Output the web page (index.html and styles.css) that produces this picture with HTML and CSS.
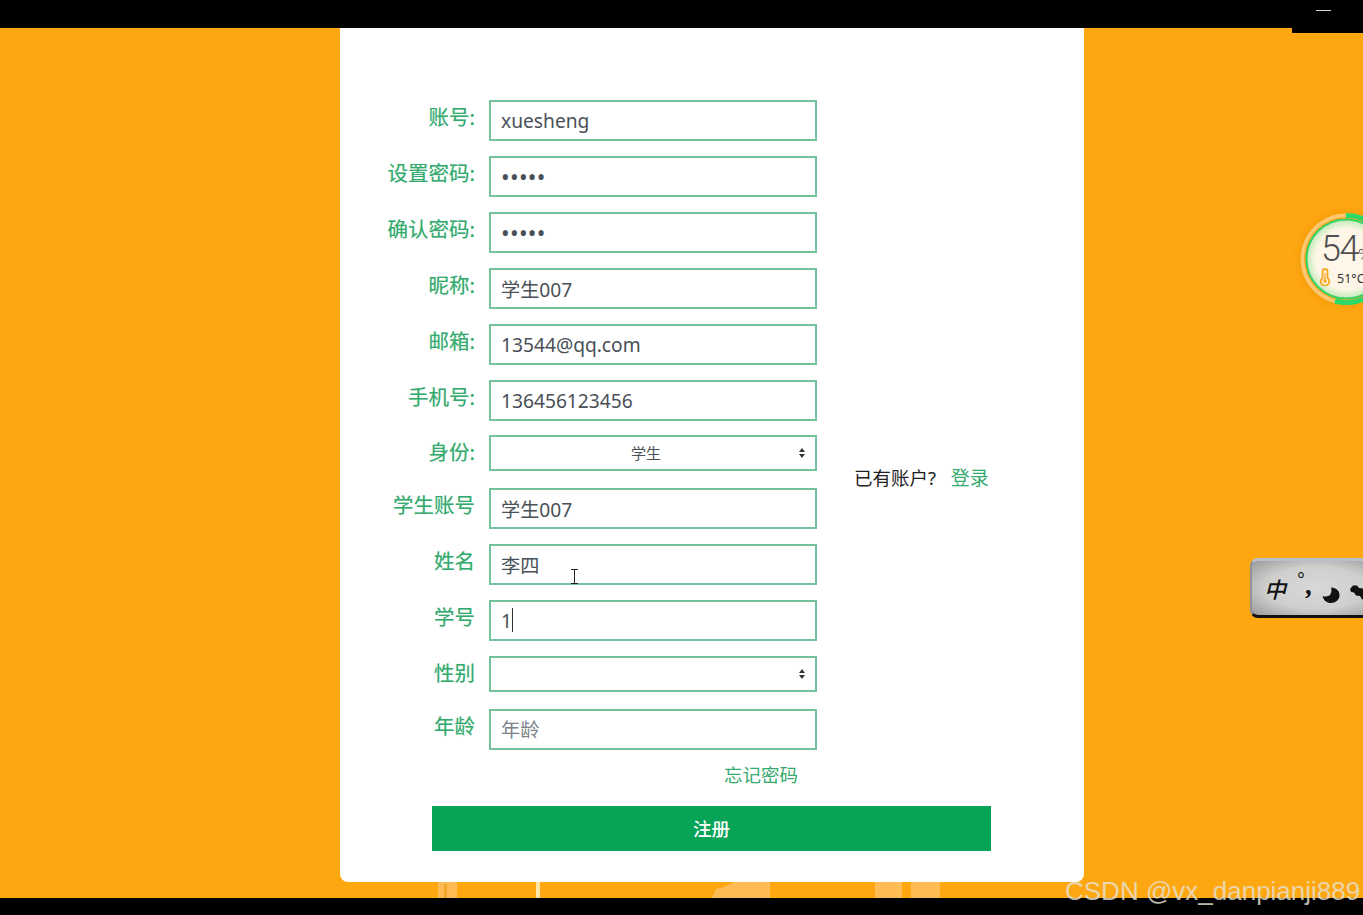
FILE: index.html
```html
<!DOCTYPE html>
<html lang="zh-CN">
<head>
<meta charset="utf-8">
<title>注册</title>
<link rel="stylesheet" href="styles.css">
</head>
<body>
<div class="screen">
  <header class="topbar"><span class="minimize"></span></header>
  <main class="stage">
    <div class="notch"></div>
    <svg class="bg-strip" width="1363" height="16" viewBox="0 0 1363 16" aria-hidden="true">
      <rect x="438" y="0" width="19" height="16" fill="#ffbc55"/>
      <rect x="444" y="2" width="3" height="14" fill="#f2a52a"/>
      <rect x="536" y="0" width="4" height="16" fill="#ffe6a8"/>
      <path d="M712 16 L716 7 L724 5 L734 0 H770 V16 Z" fill="#ffbc55"/>
      <rect x="875" y="0" width="27" height="16" fill="#ffbc55"/>
      <rect x="911" y="0" width="29" height="16" fill="#ffbc55"/>
    </svg>
    <form class="card">
      <div class="card-body">
        <div class="fields">
          <div class="row"><label class="label">账号:</label><input class="input" value="xuesheng"></div>
          <div class="row"><label class="label">设置密码:</label><input class="input input-pw" type="password" value="12345"></div>
          <div class="row"><label class="label">确认密码:</label><input class="input input-pw" type="password" value="12345"></div>
          <div class="row"><label class="label">昵称:</label><input class="input" value="学生007"></div>
          <div class="row"><label class="label">邮箱:</label><input class="input" value="13544@qq.com"></div>
          <div class="row row-tight"><label class="label">手机号:</label><input class="input" value="136456123456"></div>
          <div class="row row-select"><label class="label">身份:</label><div class="select-wrap"><select class="select"><option>学生</option></select></div></div>
          <div class="row"><label class="label">学生账号</label><input class="input" value="学生007"></div>
          <div class="row"><label class="label">姓名</label><div class="input-wrap"><input class="input" value="李四"><span class="ibeam"></span></div></div>
          <div class="row"><label class="label">学号</label><div class="input-wrap"><input class="input" value="1"><span class="caret"></span></div></div>
          <div class="row row-select"><label class="label">性别</label><div class="select-wrap"><select class="select"><option></option></select></div></div>
          <div class="row"><label class="label">年龄</label><input class="input" placeholder="年龄"></div>
          <div class="forgot"><a class="link" href="#">忘记密码</a></div>
        </div>
        <aside class="aside">已有账户? <a class="link login" href="#">登录</a></aside>
      </div>
      <button class="submit" type="button">注册</button>
    </form>

    <div class="gauge">
      <svg class="gauge-ring" width="92" height="92" viewBox="0 0 92 92" aria-hidden="true">
        <defs>
          <radialGradient id="gauge-fill" cx="50%" cy="50%" r="50%">
            <stop offset="0%" stop-color="#fff8ec"/>
            <stop offset="78%" stop-color="#fdf6e6"/>
            <stop offset="100%" stop-color="#c4ecbc"/>
          </radialGradient>
        </defs>
        <circle cx="46" cy="46" r="39" fill="url(#gauge-fill)"/>
        <circle cx="46" cy="46" r="43.500" fill="none" stroke="#ffc877" stroke-width="3.500"/>
        <circle cx="46" cy="46" r="39.500" fill="none" stroke="#35d26c" stroke-width="2"/>
        <path d="M46 2.500 A43.500 43.500 0 1 1 35 88" fill="none" stroke="#2bd968" stroke-width="5"/>
      </svg>
      <span class="gauge-value">54<small class="gauge-pct">%</small></span>
      <svg class="gauge-thermo" width="12" height="18" viewBox="0 0 12 18" aria-hidden="true">
        <path d="M3.500 10V3.500a2.500 2.500 0 0 1 5 0V10a4.300 4.300 0 1 1-5 0Z" fill="#fff0d0" stroke="#f9a825" stroke-width="1.800"/>
        <circle cx="6" cy="13" r="1.800" fill="#f9a825"/>
        <path d="M6 5v7" stroke="#f9a825" stroke-width="1.200"/>
      </svg>
      <span class="gauge-temp">51°C</span>
    </div>

    <div class="ime">
      <span class="ime-zh">中</span>
      <span class="ime-deg">°</span>
      <span class="ime-comma">,</span>
      <svg class="ime-moon" width="18" height="16" viewBox="0 0 18 16" aria-hidden="true">
        <path d="M9 0.500 C14 0.500 18 4 17.500 9 C17 13 13.500 16 9 16 C5 16 1.500 13.500 0.500 9 C3 10 6 9.500 8 8 C9.500 6 10 3 9 0.500 Z" fill="#111"/>
      </svg>
      <svg class="ime-dog" width="16" height="15" viewBox="0 0 16 15" aria-hidden="true">
        <path d="M0 4 L3 0.500 L7 0.500 L9 3 L16 4 V13 L12 14.500 L10 11 L6 10.500 L4 7.500 L1 7 Z" fill="#111"/>
      </svg>
    </div>
  </main>
  <footer class="bottombar"></footer>
  <div class="watermark">CSDN @vx_danpianji889</div>
</div>
</body>
</html>
```

FILE: styles.css
```css
* { box-sizing: border-box; }
html, body { margin: 0; height: 100%; }
body { font-family: "Noto Sans", "Noto Sans CJK SC", sans-serif; }

.screen {
  position: relative;
  width: 1363px;
  height: 915px;
  display: flex;
  flex-direction: column;
  overflow: hidden;
  background: #ffa710;
}
.topbar { position: relative; height: 28px; background: #000; flex: none; }
.minimize {
  position: absolute;
  left: 1316px;
  top: 10px;
  width: 15px;
  height: 1px;
  background: #d8d8d8;
}
.stage {
  position: relative;
  flex: 1;
  min-height: 0;
  display: flex;
  justify-content: flex-start;
  padding-left: 340px;
}
.notch {
  position: absolute;
  right: 0;
  top: 0;
  width: 71px;
  height: 5px;
  background: #000;
}
.bg-strip { position: absolute; left: 0; bottom: 0; display: block; }
.bottombar { height: 17px; background: #000; flex: none; }

.card {
  position: relative;
  width: 744px;
  height: 854px;
  background: #fff;
  border-radius: 0 0 8px 8px;
  padding-top: 72px;
}
.card-body { display: flex; align-items: flex-start; }
.fields { width: 477px; flex: none; }

.row {
  display: flex;
  align-items: flex-start;
  gap: 14px;
  margin-bottom: 15px;
}
.row-tight { margin-bottom: 14px; }
.row-select { margin-bottom: 17px; }
.label {
  width: 135px;
  flex: none;
  text-align: right;
  font-size: 20.500px;
  line-height: 34px;
  color: #35aa6e;
  text-shadow: 0 0 1px rgba(53, 170, 110, 0.4);
}
.input-wrap { position: relative; width: 328px; height: 41px; }
.input {
  display: block;
  width: 328px;
  height: 41px;
  padding: 0 10px;
  border: 2px solid #74c29c;
  border-radius: 0;
  outline: 0;
  background: #fff;
  color: #495057;
  font: 19.200px "Noto Sans", "Noto Sans CJK SC", sans-serif;
}
.input-pw { letter-spacing: 0.300px; font-size: 23px; padding-top: 1px; }
.input::placeholder { color: #7b8289; opacity: 1; }
.select-wrap { position: relative; width: 328px; height: 36px; }
.select-wrap::before,
.select-wrap::after {
  content: "";
  position: absolute;
  right: 12px;
  width: 0;
  height: 0;
  border-left: 3.500px solid transparent;
  border-right: 3.500px solid transparent;
  pointer-events: none;
}
.select-wrap::before { top: 13px; border-bottom: 4px solid #333; }
.select-wrap::after { top: 19px; border-top: 4px solid #333; }
.select {
  display: block;
  width: 328px;
  height: 36px;
  padding: 0 14px 0 0;
  appearance: none;
  -webkit-appearance: none;
  border: 2px solid #74c29c;
  border-radius: 0;
  outline: 0;
  background: #fff;
  color: #495057;
  text-align: center;
  text-align-last: center;
  font: 15px "Noto Sans", "Noto Sans CJK SC", sans-serif;
}
.caret {
  position: absolute;
  left: 23px;
  top: 8px;
  width: 1px;
  height: 24px;
  background: #333;
}
.ibeam {
  position: absolute;
  left: 85px;
  top: 25px;
  width: 1px;
  height: 15px;
  background: #222;
}
.ibeam::before,
.ibeam::after {
  content: "";
  position: absolute;
  left: -3px;
  width: 7px;
  height: 1px;
  background: #222;
}
.ibeam::before { top: 0; }
.ibeam::after { bottom: 0; }

.forgot {
  padding-right: 19px;
  text-align: right;
  font-size: 18.500px;
  line-height: 20px;
}
.link { color: #35aa6e; text-decoration: none; }
.aside {
  margin-left: 37px;
  padding-top: 366px;
  font-size: 18.500px;
  line-height: 24px;
  color: #222;
  white-space: nowrap;
}
.login { margin-left: 10px; font-size: 19px; }
.submit {
  display: block;
  width: 559px;
  height: 45px;
  margin: 21px 0 0 92px;
  padding: 0 0 2px;
  border: 0;
  background: #07a458;
  color: #fff;
  font: 500 18.500px "Noto Sans", "Noto Sans CJK SC", sans-serif;
}

.gauge {
  position: absolute;
  left: 1300px;
  top: 185px;
  width: 92px;
  height: 92px;
  border-radius: 50%;
  box-shadow: 0 0 10px rgba(190, 110, 0, 0.25);
}
.gauge-ring { display: block; }
.gauge-value {
  position: absolute;
  left: 21px;
  top: 16px;
  font: 300 36px/40px Roboto, sans-serif;
  letter-spacing: -1.500px;
  color: #4f4f4f;
}
.gauge-pct { font-size: 17px; letter-spacing: 0; }
.gauge-thermo { position: absolute; left: 19px; top: 55px; }
.gauge-temp {
  position: absolute;
  left: 37px;
  top: 58px;
  font: 12.500px/15px "Noto Sans", sans-serif;
  color: #333;
}

.ime {
  position: absolute;
  left: 1250px;
  top: 530px;
  width: 130px;
  height: 60px;
  border-radius: 8px 0 0 8px;
  background: radial-gradient(ellipse at 50% 50%, #d8d8d6 0%, #cfcfcd 55%, #9a9a9a 100%);
  border-top: 3px solid #b9bfc9;
  border-left: 2px solid #8e9198;
  border-bottom: 3px solid #111;
  overflow: hidden;
}
.ime-zh {
  position: absolute;
  left: 12px;
  top: 13px;
  font: italic 500 22px/28px "Noto Sans CJK SC", sans-serif;
  color: #111;
}
.ime-deg {
  position: absolute;
  left: 45px;
  top: 7px;
  font: 20px/24px "Liberation Sans", sans-serif;
  color: #111;
}
.ime-comma {
  position: absolute;
  left: 54px;
  top: 9px;
  font: italic 700 28px/30px "Liberation Serif", serif;
  color: #111;
}
.ime-moon { position: absolute; left: 70px; top: 26px; }
.ime-dog { position: absolute; left: 98px; top: 24px; }

.watermark {
  position: absolute;
  left: 1065px;
  top: 877px;
  font: 26px/28px "Liberation Sans", sans-serif;
  color: rgba(230, 224, 210, 0.82);
  white-space: nowrap;
}
```
